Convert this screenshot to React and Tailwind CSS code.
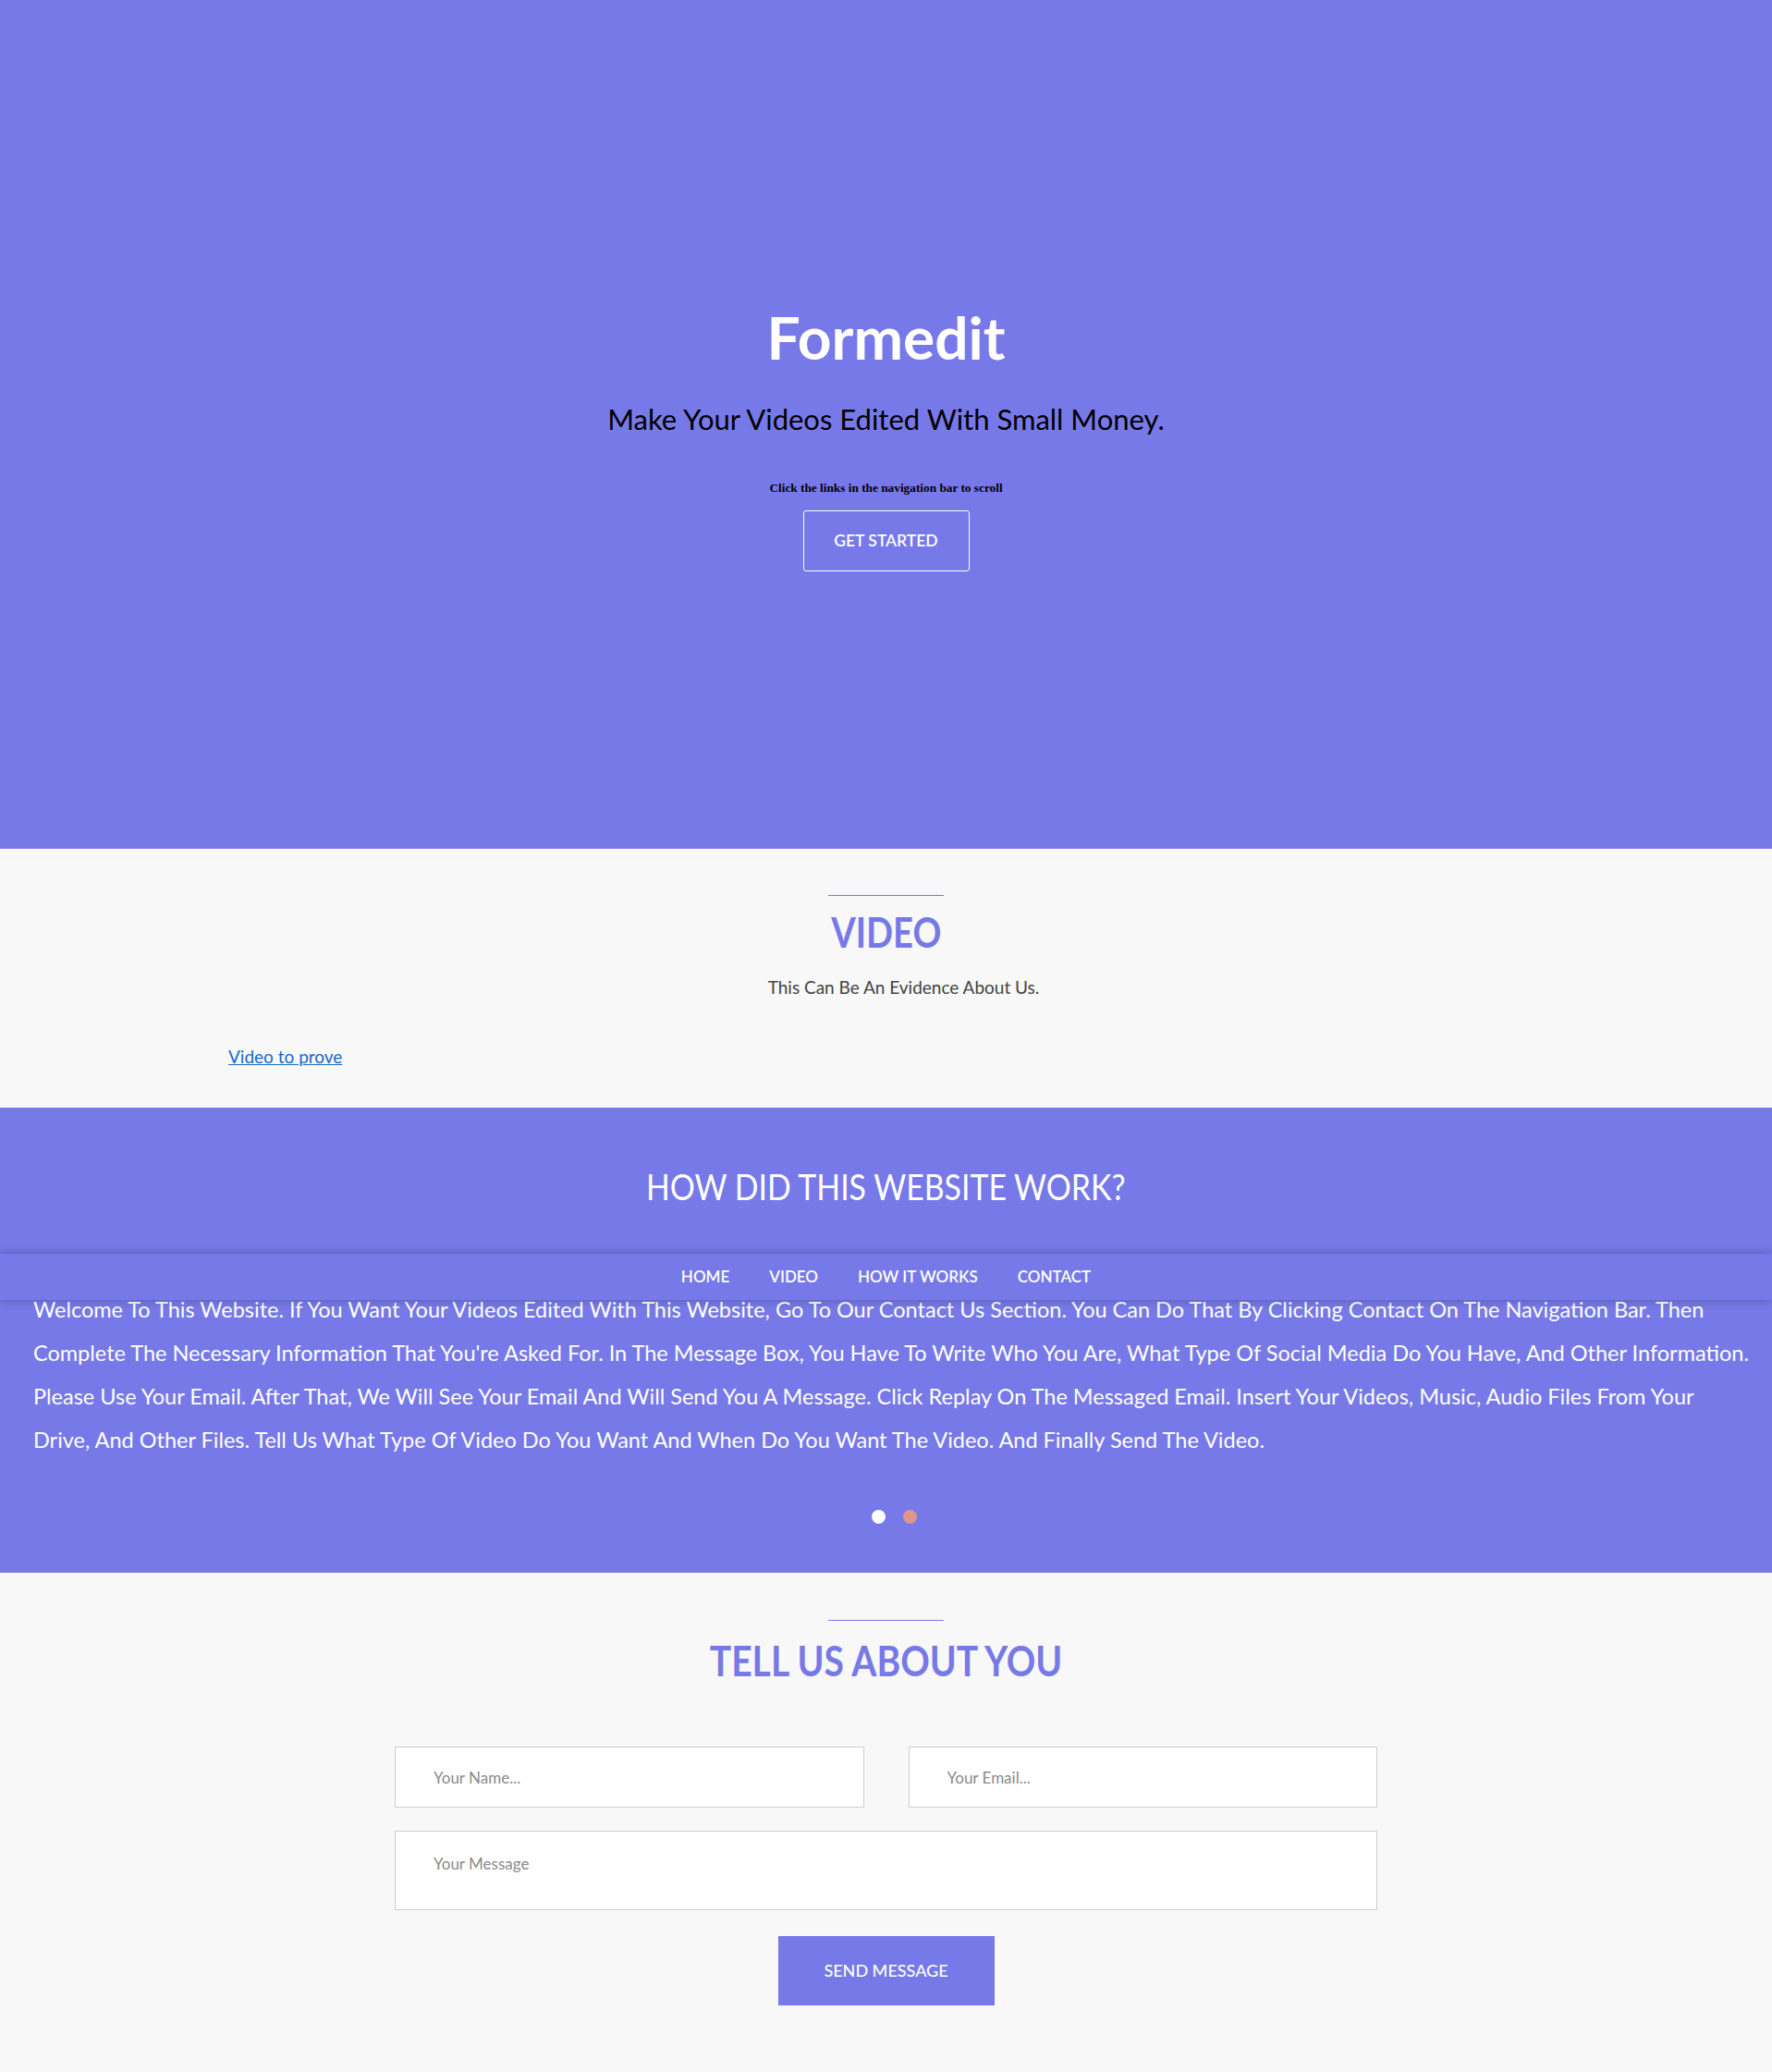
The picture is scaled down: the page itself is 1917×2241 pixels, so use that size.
import React from "react";

const LINES = [
  "Welcome To This Website. If You Want Your Videos Edited With This Website, Go To Our Contact Us Section. You Can Do That By Clicking Contact On The Navigation Bar. Then",
  "Complete The Necessary Information That You're Asked For. In The Message Box, You Have To Write Who You Are, What Type Of Social Media Do You Have, And Other Information.",
  "Please Use Your Email. After That, We Will See Your Email And Will Send You A Message. Click Replay On The Messaged Email. Insert Your Videos, Music, Audio Files From Your",
  "Drive, And Other Files. Tell Us What Type Of Video Do You Want And When Do You Want The Video. And Finally Send The Video.",
];

export default function App() {
  return (
    <div className="relative w-full bg-[#f7f8f7] font-['Lato',sans-serif]">
      {/* HERO */}
      <section className="h-[918px] bg-[#7779e8] flex flex-col items-center pt-[327px]">
        <h1 className="text-[64px] leading-[1.2] font-bold text-white">Formedit</h1>
        <p className="mt-[31px] text-[31px] leading-[1.2] text-black">
          Make Your Videos Edited With Small Money.
        </p>
        <p className="mt-[49px] text-[13.3px] leading-[14px] font-bold text-black font-['Liberation_Serif',serif]">
          Click the links in the navigation bar to scroll
        </p>
        <button className="mt-[17px] w-[180px] h-[66px] border border-white rounded-[3px] text-white text-[17.5px] font-semibold">
          GET STARTED
        </button>
      </section>

      {/* VIDEO */}
      <section className="h-[280px] pt-[50px] flex flex-col items-center">
        <div className="w-[125px] h-px bg-[#7779e8]" />
        <h2 className="mt-[11px] text-[46px] leading-[1.2] font-bold text-[#7779e8] scale-x-[0.83]">
          VIDEO
        </h2>
        <p className="mt-[19px] pl-[38px] text-[19px] leading-[27px] text-[#444]">
          This Can Be An Evidence About Us.
        </p>
        <div className="w-full mt-[48px] pl-[247px]">
          <a href="#" className="text-[19px] leading-[27px] text-[#1668c9] underline">
            Video to prove
          </a>
        </div>
      </section>

      {/* HOW IT WORKS */}
      <section className="h-[503px] bg-[#7779e8] pt-[63px] flex flex-col items-center">
        <h2 className="text-[38px] leading-[1.2] text-white scale-x-[0.89]">
          HOW DID THIS WEBSITE WORK?
        </h2>
        <p className="mt-[86px] self-stretch pl-[36px] text-[23.5px] leading-[47px] text-white">
          {LINES.map((l, i) => (
            <span key={i} className="block whitespace-nowrap">
              {l}
            </span>
          ))}
        </p>
        <div className="mt-[52px] pl-[17px] flex gap-[19px]">
          <span className="w-[15px] h-[15px] rounded-full bg-white" />
          <span className="w-[15px] h-[15px] rounded-full bg-[#df9689]" />
        </div>
      </section>

      {/* CONTACT */}
      <section className="h-[540px] pt-[51px] flex flex-col items-center">
        <div className="w-[125px] h-px bg-[#7779e8]" />
        <h2 className="mt-[15px] text-[46px] leading-[1.2] font-bold text-[#7779e8] scale-x-[0.85]">
          TELL US ABOUT YOU
        </h2>
        <form className="mt-[66px] w-[1063px] flex flex-col" onSubmit={(e) => e.preventDefault()}>
          <div className="flex gap-[48px]">
            <input
              placeholder="Your Name..."
              className="flex-1 h-[66px] bg-white border border-[#cdcdcd] pl-[41px] text-[17px] text-[#555] placeholder:text-[#8a8a8a] outline-none"
            />
            <input
              placeholder="Your Email..."
              className="flex-1 h-[66px] bg-white border border-[#cdcdcd] pl-[41px] text-[17px] text-[#555] placeholder:text-[#8a8a8a] outline-none"
            />
          </div>
          <textarea
            placeholder="Your Message"
            className="mt-[25px] h-[86px] resize-none bg-white border border-[#cdcdcd] pl-[41px] pt-[22px] text-[17px] text-[#555] placeholder:text-[#8a8a8a] outline-none"
          />
          <div className="flex justify-center mt-[28px]">
            <button className="w-[234px] h-[75px] bg-[#7779e8] text-white text-[18px] font-medium">
              SEND MESSAGE
            </button>
          </div>
        </form>
      </section>

      <nav className="absolute left-0 right-0 top-[1356px] h-[50px] bg-[#7779e8] shadow-[0_0_10px_rgba(0,0,0,0.28)] flex items-center justify-center gap-[43px]">
        {["HOME", "VIDEO", "HOW IT WORKS", "CONTACT"].map((t) => (
          <a key={t} href="#" className="text-white text-[17px] font-semibold">
            {t}
          </a>
        ))}
      </nav>
    </div>
  );
}
